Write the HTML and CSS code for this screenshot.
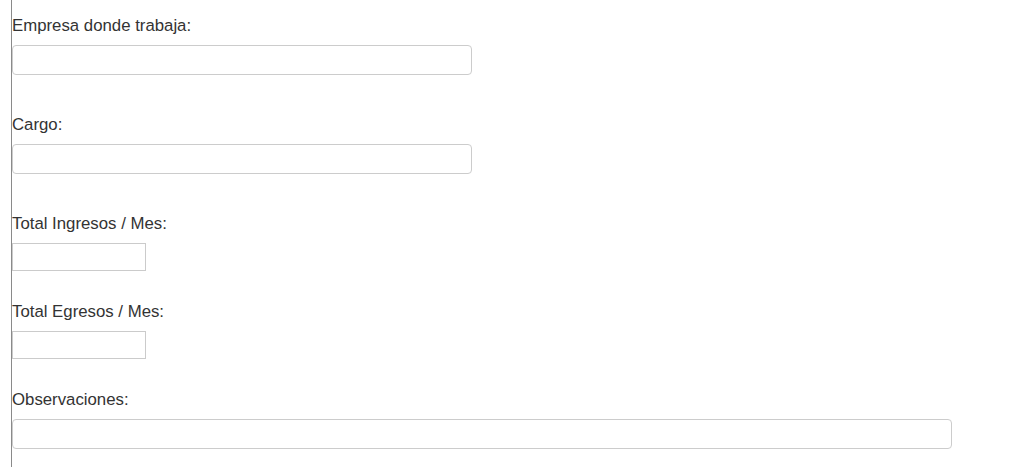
FILE: index.html
```html
<!DOCTYPE html>
<html lang="es">
<head>
    <meta charset="UTF-8">
    <meta name="viewport" content="width=device-width, initial-scale=1.0">
    <title>Datos laborales</title>
    <link rel="stylesheet" href="styles.css">
</head>
<body>
    <div class="form-panel">
        <!-- Datos laborales -->
        <div class="field field-wide">
            <label for="empresa">Empresa donde trabaja:</label>
            <input type="text" id="empresa" class="text-input">
        </div>

        <div class="field field-wide">
            <label for="cargo">Cargo:</label>
            <input type="text" id="cargo" class="text-input">
        </div>

        <div class="field field-short">
            <label for="ingresos">Total Ingresos / Mes:</label>
            <input type="text" id="ingresos" class="num-input">
        </div>

        <div class="field field-short">
            <label for="egresos">Total Egresos / Mes:</label>
            <input type="text" id="egresos" class="num-input">
        </div>

        <div class="field">
            <label for="observaciones">Observaciones:</label>
            <input type="text" id="observaciones" class="text-input text-input-full">
        </div>
    </div>
</body>
</html>
```

FILE: styles.css
```css
/* Global styles */
body {
    font-family: "Liberation Sans", Arial, sans-serif;
    font-size: 16.8px;
    color: #333;
    background-color: #fff;
    margin: 0;
}

/* Panel with the left rule */
.form-panel {
    margin-left: 11px;
    border-left: 1px solid #8a8a8a;
    padding-top: 16px;
    min-height: 451px;
}

/* Fields */
.field label {
    display: block;
    line-height: 20px;
    margin-bottom: 9px;
}

.field-wide {
    margin-bottom: 40px;
}

.field-short {
    margin-bottom: 31px;
}

.text-input {
    display: block;
    box-sizing: border-box;
    width: 460px;
    height: 30px;
    margin: 0;
    padding: 4px 8px;
    border: 1px solid #ccc;
    border-radius: 4px;
    background-color: #fff;
    font: inherit;
}

.text-input-full {
    width: 940px;
}

.num-input {
    display: block;
    box-sizing: border-box;
    width: 134px;
    height: 28px;
    margin: 0;
    padding: 2px 4px;
    border: 1px solid #cbcbcb;
    border-radius: 0;
    background-color: #fff;
    font: inherit;
}
```
